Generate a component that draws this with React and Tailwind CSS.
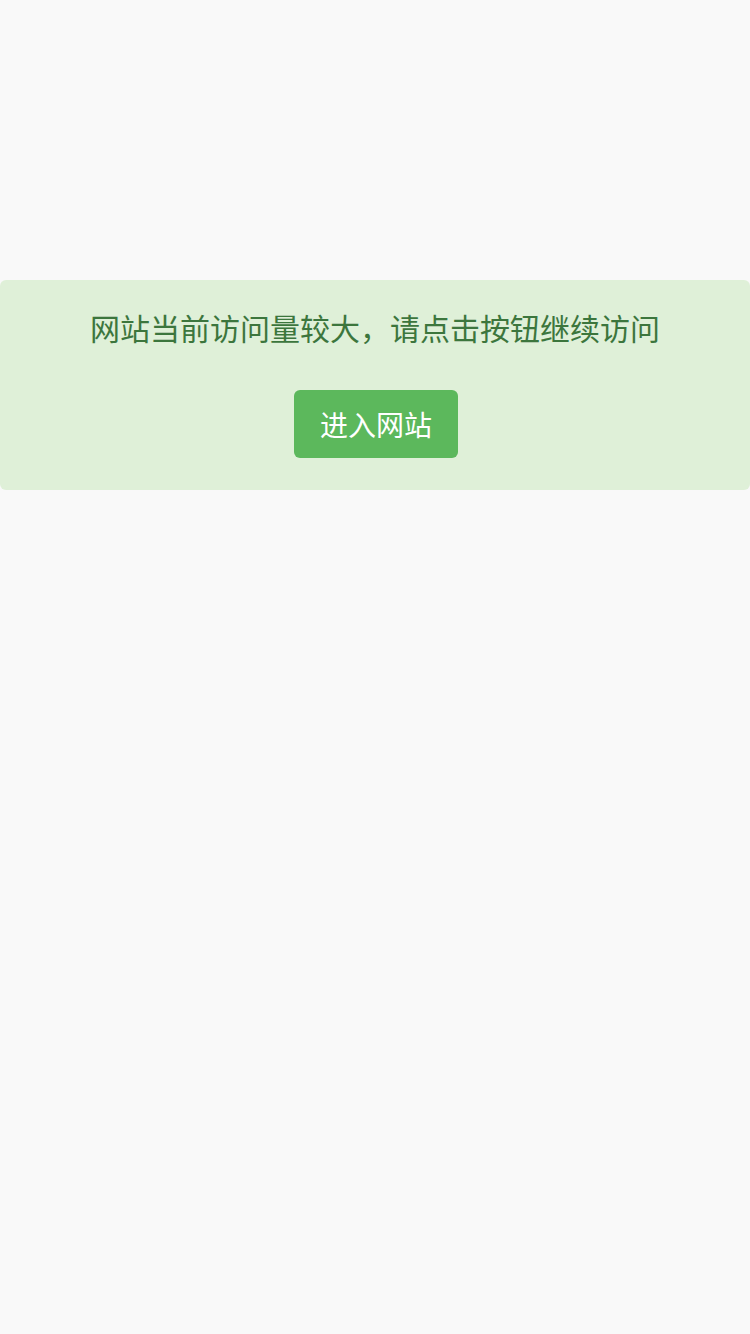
export default function App() {
  return (
    <div
      className="min-h-[1334px] w-[750px] bg-[#f9f9f9] pt-[280px]"
      style={{ fontFamily: '"Noto Sans CJK SC", "Noto Sans", sans-serif' }}
    >
      <div className="flex flex-col items-center rounded-[6px] bg-[#dff0d8] pt-[26px] pb-[32px] text-[#3c763d]">
        <p className="text-[30px] leading-[42px]">网站当前访问量较大，请点击按钮继续访问</p>
        <button
          type="button"
          className="mt-[42px] ml-[2px] h-[68px] w-[164px] rounded-[6px] bg-[#5cb85c] text-[28px] leading-[40px] text-white"
        >
          进入网站
        </button>
      </div>
    </div>
  );
}
